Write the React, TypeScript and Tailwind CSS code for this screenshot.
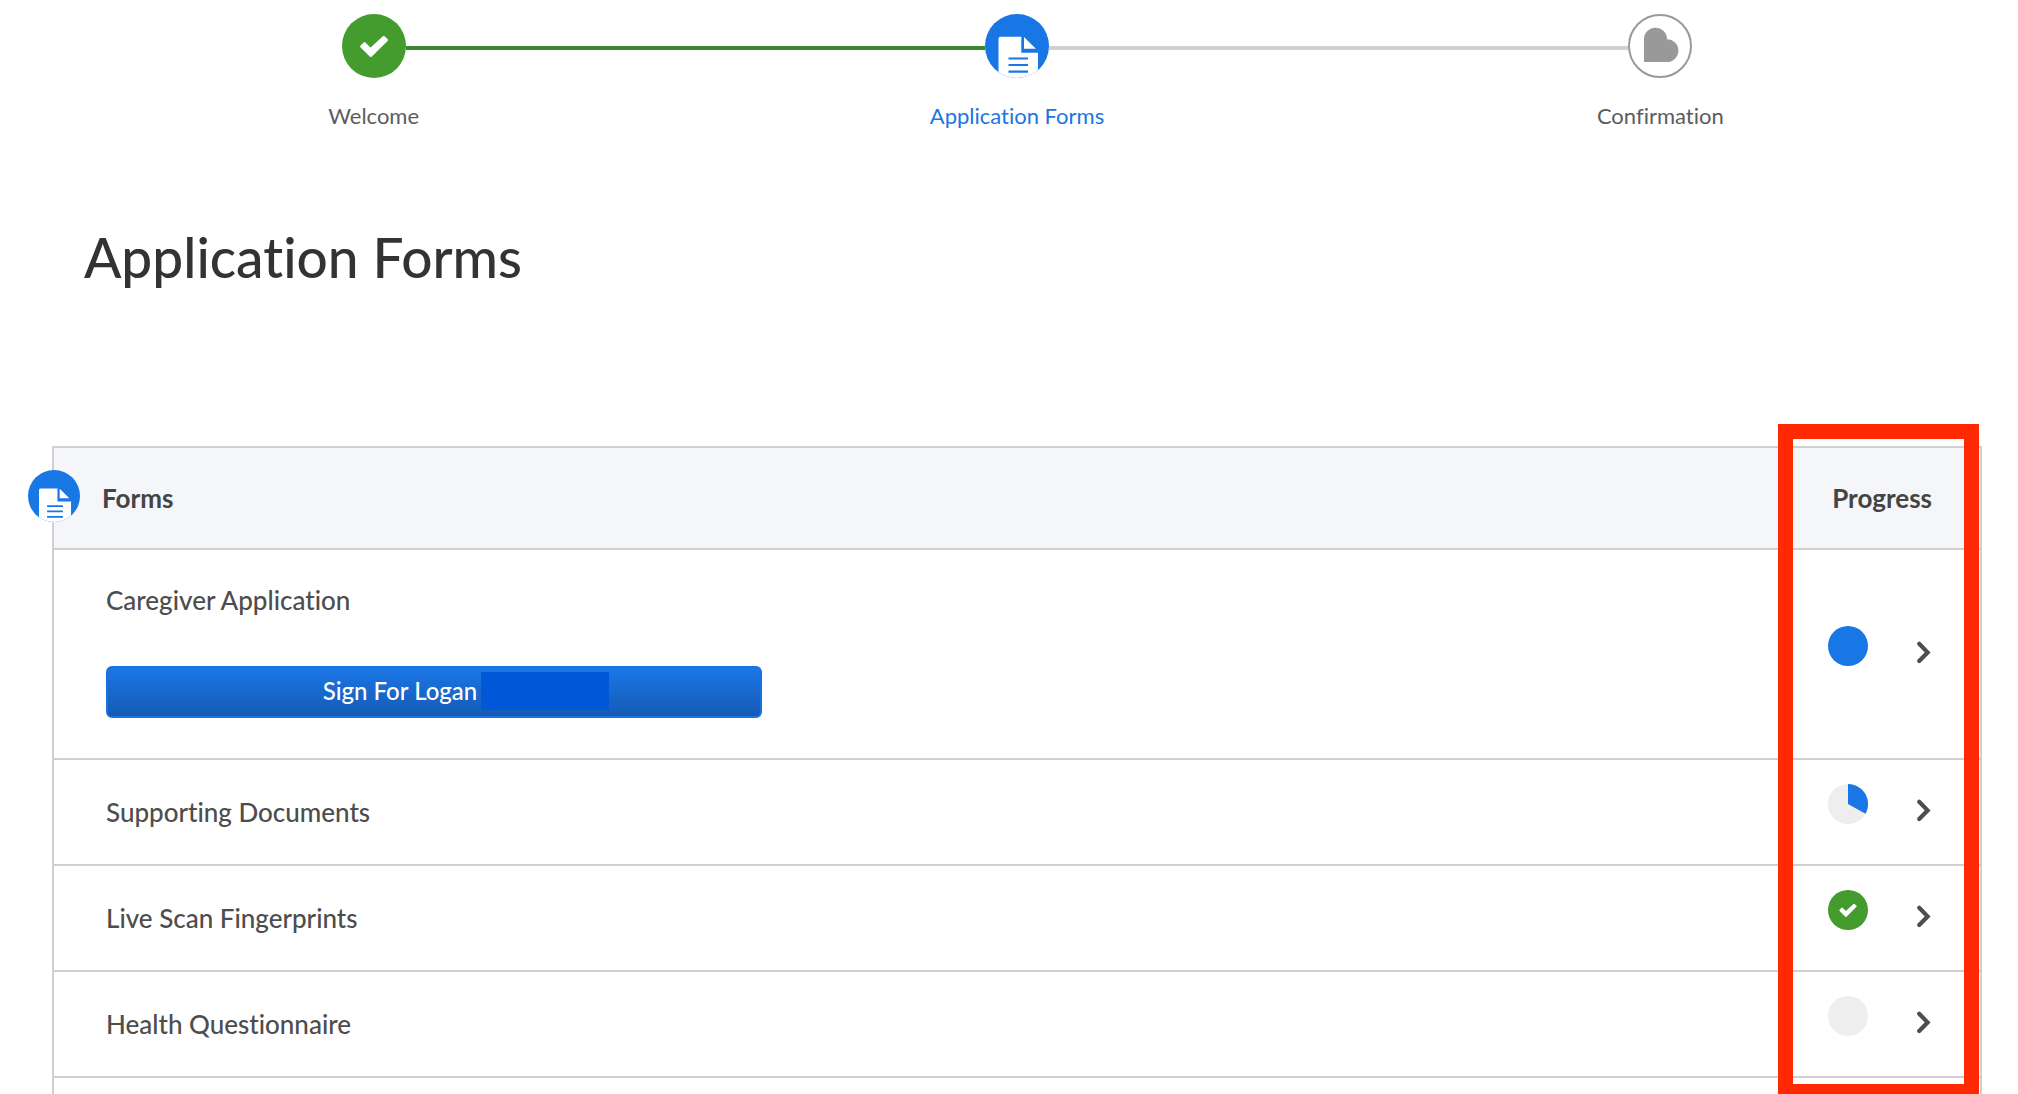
import type { ReactNode } from 'react'

type Progress = 'full' | 'third' | 'done' | 'empty'

function CheckCircle({ className }: { className: string }) {
  return (
    <svg viewBox="0 0 64 64" className={className} aria-hidden="true">
      <circle cx="32" cy="32" r="32" fill="#449b2e" />
      <path
        d="M19.5 32.5 L22.5 29.5 L28.5 35.5 L41.7 23.3 L44.7 26 L28.7 41.7 Z"
        fill="#fff"
        stroke="#fff"
        strokeWidth="2.6"
        strokeLinejoin="round"
      />
    </svg>
  )
}

function DocumentCircle({ className, id }: { className: string; id: string }) {
  return (
    <svg viewBox="0 0 64 64" className={className} aria-hidden="true">
      <clipPath id={id}>
        <circle cx="32" cy="32" r="32" />
      </clipPath>
      <circle cx="32" cy="32" r="32" fill="#1876e5" />
      <g clipPath={`url(#${id})`}>
        <path d="M15.5 22.7 H36.3 V38.7 H53 V66 H13.5 V24.7 Q13.5 22.7 15.5 22.7 Z" fill="#fff" />
        <path d="M39 23 L50.8 34.7 H39 Z" fill="#fff" />
        <path d="M23.5 44.5 H43 M23.5 51 H43 M23.5 57.7 H43" stroke="#1876e5" strokeWidth="2.2" />
      </g>
    </svg>
  )
}

function HeartCircle({ className }: { className: string }) {
  return (
    <svg viewBox="0 0 64 64" className={className} aria-hidden="true">
      <circle cx="32" cy="32" r="31" fill="#fff" stroke="#999" strokeWidth="2" />
      <path d="M16 25.2 A11.5 11.5 0 0 1 39 25.2 A11.4 11.4 0 0 1 39 48 H16 Z" fill="#999" />
    </svg>
  )
}

function ProgressMark({ value }: { value: Progress }) {
  if (value === 'done') return <CheckCircle className="mb-4 size-10" />
  return (
    <svg viewBox="0 0 40 40" className="mb-4 size-10" aria-hidden="true">
      <circle cx="20" cy="20" r="20" fill={value === 'full' ? '#1876e5' : '#eee'} />
      {value === 'third' && <path d="M20 20 V0 A20 20 0 0 1 37.5 29.7 Z" fill="#1876e5" />}
    </svg>
  )
}

function Step({
  icon,
  label,
  labelClass,
  before,
  after,
}: {
  icon: ReactNode
  label: string
  labelClass: string
  before: string
  after: string
}) {
  return (
    <li className="flex flex-1 flex-col items-center">
      <div className="flex w-full items-center">
        <span className={`mt-1 h-1 flex-1 ${before}`} />
        {icon}
        <span className={`mt-1 h-1 flex-1 ${after}`} />
      </div>
      <span className={`mt-6 text-[22px] leading-7 ${labelClass}`}>{label}</span>
    </li>
  )
}

function FormRow({ name, progress, children }: { name: string; progress: Progress; children?: ReactNode }) {
  return (
    <tr>
      <td className={`border-b-2 border-[#d0d0d0] pl-[52px] ${children ? 'pt-[34px] pb-10' : 'h-[106px]'}`}>
        <div className="leading-8">{name}</div>
        {children}
      </td>
      <td className="border-b-2 border-[#d0d0d0]">
        <div className="flex items-center justify-end gap-12 pr-12">
          <ProgressMark value={progress} />
          <button type="button" aria-label={`Open ${name}`} className="mb-1 flex">
            <svg viewBox="0 0 16 24" className="h-6 w-4" fill="none" stroke="#4d4d4d" strokeWidth="4.2" strokeLinecap="round" aria-hidden="true">
              <path d="M3.2 3.8 L11.6 12.4 L3.2 21" />
            </svg>
          </button>
        </div>
      </td>
    </tr>
  )
}

export default function App() {
  return (
    <main className="h-screen overflow-hidden bg-white pt-3.5 pr-9 pl-[52px] font-['Lato',sans-serif] text-[#4d4d4d] [font-variant-ligatures:none]">
      <ol className="flex">
        <Step
          icon={<CheckCircle className="size-16" />}
          label="Welcome"
          labelClass="text-[#5c5c5c]"
          before="bg-transparent"
          after="bg-[#378a2a]"
        />
        <Step
          icon={<DocumentCircle className="size-16" id="step-document" />}
          label="Application Forms"
          labelClass="text-[#1876e5]"
          before="bg-[#378a2a]"
          after="bg-[#d0d0d0]"
        />
        <Step
          icon={<HeartCircle className="size-16" />}
          label="Confirmation"
          labelClass="text-[#5c5c5c]"
          before="bg-[#d0d0d0]"
          after="bg-transparent"
        />
      </ol>

      <h1 className="mt-[95px] ml-8 text-[55px] leading-16 font-medium text-[#333]">Application Forms</h1>

      <div className="relative mt-[157px]">
        <table className="w-full border-separate border-spacing-0 border-2 border-[#d0d0d0] text-[26px] font-medium">
          <thead>
            <tr className="bg-[#f4f6fa] text-left text-[#444]">
              <th scope="col" className="relative h-[102px] border-b-2 border-[#d0d0d0] pl-12 font-bold">
                <DocumentCircle className="absolute top-[22px] -left-[26px] size-[52px]" id="table-document" />
                Forms
              </th>
              <th scope="col" className="w-52 border-b-2 border-[#d0d0d0] pr-12 text-right font-bold">
                Progress
              </th>
            </tr>
          </thead>
          <tbody>
            <FormRow name="Caregiver Application" progress="full">
              <button
                type="button"
                className="mt-[50px] flex h-13 w-full max-w-[656px] items-center justify-center gap-1 rounded-md border-2 border-[#1a73e2] bg-linear-to-b from-[#1b76e6] to-[#155bb5] pb-0.5 pl-16 text-2xl font-medium text-white"
              >
                Sign For Logan
                <span className="h-[38px] w-32 bg-[#0058d6]" />
              </button>
            </FormRow>
            <FormRow name="Supporting Documents" progress="third" />
            <FormRow name="Live Scan Fingerprints" progress="done" />
            <FormRow name="Health Questionnaire" progress="empty" />
            <tr>
              <td colSpan={2} className="h-[106px]" />
            </tr>
          </tbody>
        </table>
        <div className="pointer-events-none absolute -top-[22px] right-[3px] h-[675px] w-[201px] border-[15px] border-[#ff2a04]" />
      </div>
    </main>
  )
}
